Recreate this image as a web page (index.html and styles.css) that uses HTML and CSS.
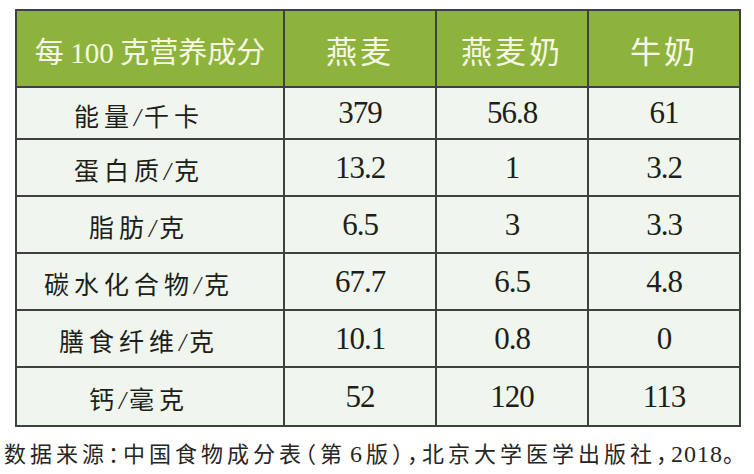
FILE: index.html
```html
<!DOCTYPE html>
<html lang="zh-CN">
<head>
<meta charset="utf-8">
<link rel="stylesheet" href="styles.css">
</head>
<body>
<div class="page">
  <table class="nutri">
    <colgroup>
      <col class="c-label"><col class="c-num"><col class="c-num"><col class="c-num">
    </colgroup>
    <thead>
      <tr class="head">
        <th class="h-label">每 <span class="lat">100</span> 克营养成分</th>
        <th>燕麦</th>
        <th>燕麦奶</th>
        <th>牛奶</th>
      </tr>
    </thead>
    <tbody>
      <tr class="first"><td class="label">能量<span class="sl">/</span>千卡</td><td>379</td><td>56.8</td><td>61</td></tr>
      <tr><td class="label">蛋白质<span class="sl">/</span>克</td><td>13.2</td><td>1</td><td>3.2</td></tr>
      <tr><td class="label">脂肪<span class="sl">/</span>克</td><td>6.5</td><td>3</td><td>3.3</td></tr>
      <tr><td class="label">碳水化合物<span class="sl">/</span>克</td><td>67.7</td><td>6.5</td><td>4.8</td></tr>
      <tr><td class="label">膳食纤维<span class="sl">/</span>克</td><td>10.1</td><td>0.8</td><td>0</td></tr>
      <tr class="last"><td class="label">钙<span class="sl">/</span>毫克</td><td>52</td><td>120</td><td>113</td></tr>
    </tbody>
  </table>
  <p class="source">数据来源：中国食物成分表（第<span class="lat six">6</span>版），北京大学医学出版社，<span class="lat">2018</span>。</p>
</div>
</body>
</html>
```
FILE: styles.css
```css
html, body {
  margin: 0;
  padding: 0;
  background: #ffffff;
}
.page {
  width: 754px;
  height: 474px;
  padding: 9px 0 0 15px;
  box-sizing: border-box;
}
.nutri {
  border-collapse: collapse;
  width: 724px;
  table-layout: fixed;
  border: 2px solid #333833;
}
.c-label { width: 268px; }
.c-num { width: 152px; }
.nutri th,
.nutri td {
  border: 2px solid #3d433c;
  text-align: center;
  padding: 0;
}
.head {
  height: 77px;
  background: #8db33d;
}
.head th {
  color: #f6f8e4;
  font-family: "Noto Sans CJK SC", sans-serif;
  font-weight: 400;
  font-size: 31px;
  letter-spacing: 3px;
  padding-top: 2px;
}
.head th.h-label {
  letter-spacing: 0;
  font-size: 29px;
}
.lat {
  font-family: "Liberation Serif", serif;
  font-weight: 400;
}
tbody tr {
  height: 57px;
  background: #f0f6ed;
}
tbody tr.first { height: 52px; }
tbody tr.last { height: 59px; }
tbody td {
  font-family: "Liberation Serif", serif;
  font-size: 31px;
  letter-spacing: -1px;
  color: #1d1f1b;
  padding-top: 5px;
}
tbody td.label {
  font-family: "Noto Sans CJK SC", sans-serif;
  font-size: 25px;
  letter-spacing: 5px;
  padding-right: 22px;
  padding-top: 3px;
}
tbody td.label .sl {
  font-family: "Liberation Serif", serif;
  font-style: italic;
  letter-spacing: 3px;
}
.source {
  margin: 9px 0 0 -11px;
  font-family: "Noto Sans CJK SC", sans-serif;
  font-size: 22px;
  letter-spacing: 4px;
  line-height: 32px;
  color: #262626;
  font-feature-settings: "halt";
  white-space: nowrap;
}
.source .lat {
  font-size: 24px;
  letter-spacing: 1px;
}
.source .six {
  padding: 0 3px 0 4px;
}
```
